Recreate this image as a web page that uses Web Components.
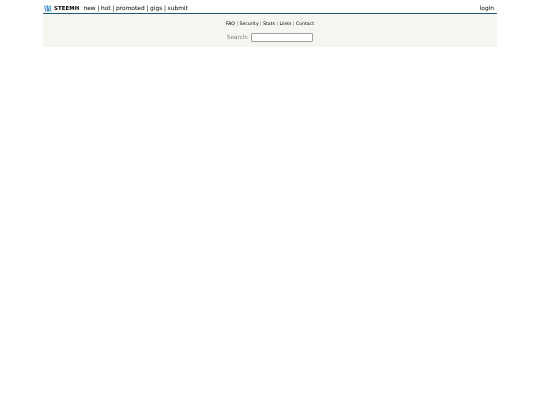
<!DOCTYPE html>
<html lang="en">
  <head>
    <meta charset="UTF-8" />
    <title>Steemh</title>
    <style>
      body {
        margin: 0;
        background: #fff;
        font-family: 'DejaVu Sans', sans-serif;
        text-rendering: geometricPrecision;
      }
    </style>
  </head>
  <body>
    <hn-page>
      <hn-header slot="header"></hn-header>
      <hn-footer slot="footer"></hn-footer>
    </hn-page>

    <template id="pageTemplate">
      <style>
        :host {
          display: block;
          width: 454px;
          margin: 0 auto;
          will-change: transform;
        }
      </style>
      <slot name="header"></slot>
      <slot name="footer"></slot>
    </template>

    <template id="headerTemplate">
      <style>
        :host {
          display: flex;
          align-items: center;
          padding: 4px 3px 0 1px;
          height: 9px;
          border-bottom: 1px solid #1a5a80;
          font-size: 5.9px;
          color: #000;
        }
        svg {
          width: 8px;
          height: 7px;
          margin: 0 2px 1px 0;
        }
        .brand {
          font-weight: bold;
          font-size: 5.4px;
          margin-right: 4px;
          letter-spacing: 0.1px;
        }
        .nav span {
          margin: 0 1.7px;
        }
        .login {
          margin-left: auto;
        }
      </style>
      <svg viewBox="0 0 16 14">
        <path d="M1 1 L3.5 13 M5 1 L2.5 13" stroke="#3a8fd8" stroke-width="1.7" fill="none" />
        <path d="M7 1 L9 13 M8 7 L7 13" stroke="#1a5099" stroke-width="1.7" fill="none" />
        <path d="M11 1 L14.5 13 M13 1 L11.5 13" stroke="#2a9ad0" stroke-width="1.7" fill="none" />
      </svg>
      <span class="brand">STEEMH</span>
      <div class="nav">new<span>|</span>hot<span>|</span>promoted<span>|</span>gigs<span>|</span>submit</div>
      <span class="login">login</span>
    </template>

    <template id="footerTemplate">
      <style>
        :host {
          display: flex;
          flex-direction: column;
          align-items: center;
          height: 33px;
          background: #f6f5f0;
          box-sizing: border-box;
          padding-top: 8px;
          color: #000;
        }
        .links {
          font-size: 4.7px;
          line-height: 6px;
        }
        .links span {
          margin: 0 1.4px;
          color: #777;
        }
        form {
          display: flex;
          align-items: center;
          gap: 2px;
          margin: 5px 0 0 -0.5px;
          font-size: 5.8px;
          color: #828282;
        }
        input {
          width: 62px;
          height: 9px;
          box-sizing: border-box;
          padding: 0;
          border: 1px solid #a0a0a0;
          border-radius: 1px;
          background: #fff;
        }
      </style>
      <div class="links">FAQ<span>|</span>Security<span>|</span>Stats<span>|</span>Links<span>|</span>Contact</div>
      <form>Search: <input type="text" /></form>
    </template>

    <script>
      function define(name, templateId) {
        customElements.define(
          name,
          class extends HTMLElement {
            constructor() {
              super()
              this.attachShadow({ mode: 'open' })
              const content = document.querySelector(templateId).content
              this.shadowRoot.append(document.importNode(content, true))
            }
          }
        )
      }

      define('hn-page', '#pageTemplate')
      define('hn-header', '#headerTemplate')
      define('hn-footer', '#footerTemplate')
    </script>
  </body>
</html>
